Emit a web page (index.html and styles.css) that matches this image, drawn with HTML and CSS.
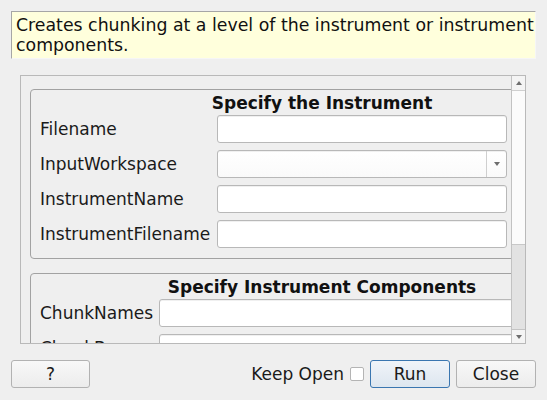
FILE: index.html
```html
<!DOCTYPE html>
<html>
<head>
<meta charset="utf-8">
<link rel="stylesheet" href="styles.css">
</head>
<body>
<div class="dialog">
  <div class="desc">Creates chunking at a level of the instrument or instrument<br>components.</div>
  <div class="scrollarea">
    <div class="viewport">
      <div class="content">
        <div class="group g1">
          <div class="title">Specify the Instrument</div>
          <div class="rows rows1">
            <label>Filename</label><div class="input"></div>
            <label>InputWorkspace</label><div class="input combo"><span class="drop"><span class="tri down"></span></span></div>
            <label>InstrumentName</label><div class="input"></div>
            <label>InstrumentFilename</label><div class="input"></div>
          </div>
        </div>
        <div class="group g2">
          <div class="title">Specify Instrument Components</div>
          <div class="rows rows2">
            <label>ChunkNames</label><div class="input"></div>
            <label>ChunkBy</label><div class="input"></div>
          </div>
        </div>
      </div>
    </div>
    <div class="vscroll">
      <div class="sbtn up"><span class="tri upt"></span></div>
      <div class="handle"></div>
      <div class="track"></div>
      <div class="sbtn dn"><span class="tri down"></span></div>
    </div>
  </div>
  <div class="buttons">
    <button class="btn help">?</button>
    <div class="spacer"></div>
    <span class="keep">Keep Open</span>
    <span class="check"></span>
    <button class="btn run">Run</button>
    <button class="btn close">Close</button>
  </div>
</div>
</body>
</html>
```

FILE: styles.css
```css
html, body {
  margin: 0;
  padding: 0;
  background: #efefef;
}
body {
  width: 547px;
  height: 400px;
  overflow: hidden;
  font-family: "DejaVu Sans", sans-serif;
  font-size: 17px;
  color: #1a1a1a;
}
.dialog {
  padding: 11px 11px 0 11px;
  display: flex;
  flex-direction: column;
}
.desc {
  box-sizing: border-box;
  height: 48px;
  background: #ffffdc;
  border-top: 1px solid #a6a6a6;
  border-left: 1px solid #a6a6a6;
  border-right: 1px solid #f6f6f6;
  border-bottom: 1px solid #f6f6f6;
  padding: 3px 0 0 4px;
  font-size: 17.33px;
  line-height: 20px;
  white-space: nowrap;
  overflow: hidden;
  color: #111;
}
.scrollarea {
  box-sizing: border-box;
  margin: 16px 10px 0 9px;
  height: 269px;
  border: 1px solid #b9b9b9;
  display: flex;
}
.viewport {
  flex: 1;
  overflow: hidden;
  padding: 13px 0 0 9px;
}
.content {
  width: 600px;
}
.group {
  box-sizing: border-box;
  width: 584px;
  border: 1px solid #a2a2a2;
  border-radius: 4px;
  padding: 3px 9px 10px 9px;
}
.g2 {
  margin-top: 14px;
}
.title {
  font-weight: bold;
  text-align: center;
  line-height: 20px;
  margin-bottom: 2px;
  color: #111;
}
.rows {
  display: grid;
  row-gap: 7px;
  align-items: center;
}
.rows1 {
  grid-template-columns: 177px 290px;
}
.rows2 {
  grid-template-columns: 119px 1fr;
}
label {
  white-space: nowrap;
  line-height: 20px;
}
.input {
  box-sizing: border-box;
  height: 28px;
  background: #fff;
  border: 1px solid #b8b8b8;
  border-radius: 3px;
  box-shadow: inset 0 1px 0 #f0f0f0;
}
.combo {
  display: flex;
  justify-content: flex-end;
  background: linear-gradient(#ffffff, #fafafa);
}
.drop {
  width: 19px;
  border-left: 1px solid #cfcfcf;
  display: flex;
  align-items: center;
  justify-content: center;
}
.tri {
  width: 0;
  height: 0;
  border-left: 3.5px solid transparent;
  border-right: 3.5px solid transparent;
}
.tri.down {
  border-top: 4px solid #6e6e6e;
}
.tri.upt {
  border-bottom: 4px solid #6e6e6e;
}
.vscroll {
  width: 13px;
  border-left: 1px solid #c2c2c2;
  display: flex;
  flex-direction: column;
  background: #f4f4f4;
}
.sbtn {
  height: 14px;
  display: flex;
  align-items: center;
  justify-content: center;
  background: #f4f4f4;
}
.sbtn.up {
  border-bottom: 1px solid #cfcfcf;
}
.sbtn.dn {
  height: 13px;
  border-top: 1px solid #c4c4c4;
}
.handle {
  height: 153px;
  background: #fbfbfb;
  border-bottom: 1px solid #c8c8c8;
}
.track {
  flex: 1;
  background: #e2e2e2;
}
.buttons {
  display: flex;
  align-items: center;
  margin-top: 16px;
  height: 28px;
}
.spacer {
  flex: 1;
}
.btn {
  box-sizing: border-box;
  height: 28px;
  width: 80px;
  font-family: "DejaVu Sans", sans-serif;
  font-size: 17px;
  color: #1a1a1a;
  border: 1px solid #b2b2b2;
  border-radius: 3px;
  background: linear-gradient(#f8f8f8, #ececec);
  padding: 0;
}
.btn.help {
  width: 79px;
}
.btn.run {
  border-color: #3a76b0;
  background: linear-gradient(#f0f4f9, #dde6ef);
  margin-left: 6px;
}
.btn.close {
  margin-left: 6px;
}
.keep {
  color: #1a1a1a;
}
.check {
  box-sizing: border-box;
  width: 14px;
  height: 14px;
  margin-left: 6px;
  background: #fff;
  border: 1px solid #b4b4b4;
  border-radius: 2px;
}
```
